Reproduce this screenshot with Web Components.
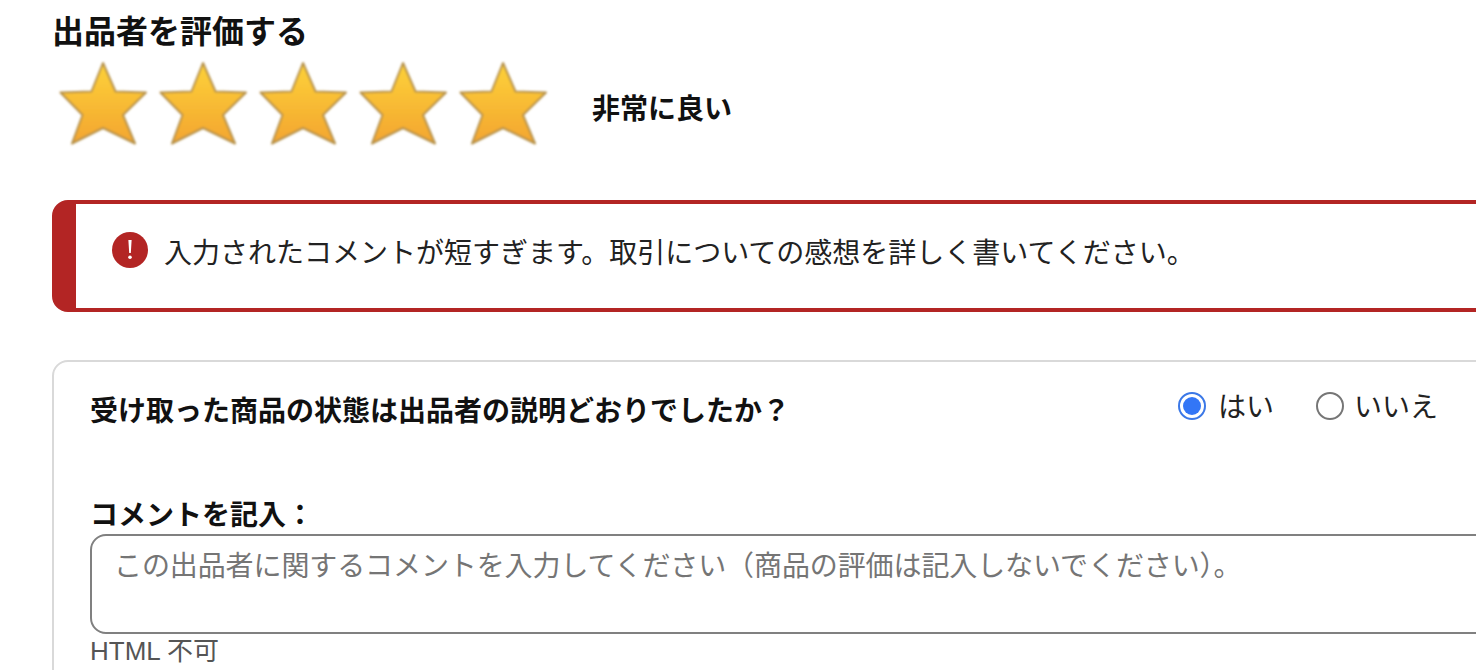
<!DOCTYPE html>
<html lang="ja">
<head>
<meta charset="utf-8">
<title>出品者を評価する</title>
<style>
html,body{margin:0;padding:0;overflow:hidden;height:670px;background:#fff}
body{font-family:"Liberation Sans","Noto Sans CJK JP",sans-serif;color:#111}
</style>
</head>
<body>
<feedback-page>
  <h-title>出品者を評価する</h-title>
  <star-rating value="5" style="margin-top:8px">非常に良い</star-rating>
  <error-box style="margin-top:42px">入力されたコメントが短すぎます。取引についての感想を詳しく書いてください。</error-box>
  <feedback-card style="margin-top:48px">
    <yes-no>受け取った商品の状態は出品者の説明どおりでしたか？</yes-no>
    <comment-box label="コメントを記入：" placeholder="この出品者に関するコメントを入力してください（商品の評価は記入しないでください）。" hint="HTML 不可"></comment-box>
  </feedback-card>
</feedback-page>

<script>
class FeedbackPage extends HTMLElement {
    constructor() {
        super();
        this.attachShadow({mode: 'open'});
        this.shadowRoot.innerHTML = `
<style>
:host{display:block;width:1424px;padding:12px 0 0 52px;box-sizing:content-box}
::slotted(*){margin-right:-16px}
</style>
<slot></slot>`;
    }
}
customElements.define('feedback-page', FeedbackPage);

class HTitle extends HTMLElement {
    constructor() {
        super();
        this.attachShadow({mode: 'open'});
        this.shadowRoot.innerHTML = `
<style>
:host{display:block;font-size:32px;line-height:40px;font-weight:700;color:#111}
</style>
<slot></slot>`;
    }
}
customElements.define('h-title', HTitle);

class StarRating extends HTMLElement {
    constructor() {
        super();
        this.attachShadow({mode: 'open'});
        let stars = '';
        const n = Number(this.getAttribute('value') || 0);
        for (let i = 0; i < n; i++) {
            stars += `<svg width="100" height="98" viewBox="0 0 100 98">
<defs><linearGradient id="g${i}" x1="0" y1="0" x2="0" y2="1"><stop offset="0" stop-color="#fdd23a"/><stop offset="1" stop-color="#f3a52f"/></linearGradient>
<filter id="b${i}" x="-10%" y="-10%" width="120%" height="120%"><feGaussianBlur stdDeviation="0.9"/></filter></defs>
<path filter="url(#b${i})" d="M51 3 L63.5 31.5 L94 32.5 L71 55 L83 83.5 L51 68 L20 83.5 L30.5 55 L8.5 32.5 L39.5 31.5 Z" fill="url(#g${i})" stroke="#b7924a" stroke-width="2" stroke-linejoin="round"/>
</svg>`;
        }
        this.shadowRoot.innerHTML = `
<style>
:host{display:flex;align-items:center;height:98px}
.stars{display:flex;width:500px}
.stars svg{display:block;flex:none}
.label{margin-left:40px;font-size:28px;height:40px;line-height:42px;font-weight:700;color:#111}
</style>
<div class="stars">${stars}</div>
<div class="label"><slot></slot></div>`;
    }
}
customElements.define('star-rating', StarRating);

class ErrorBox extends HTMLElement {
    constructor() {
        super();
        this.attachShadow({mode: 'open'});
        this.shadowRoot.innerHTML = `
<style>
:host{display:flex;align-items:flex-start;gap:16px;box-sizing:border-box;height:112px;padding:28px 36px 0;
  border:4px solid #b32524;border-left-width:24px;border-radius:16px 0 0 16px;background:#fff}
svg{display:block;flex:none}
.msg{font-size:28px;height:40px;line-height:44px;color:#222}
</style>
<svg width="36" height="36" viewBox="0 0 36 36">
<circle cx="18" cy="18" r="18" fill="#b32524"/>
<path d="M16.4 8h3.2l-.8 13h-1.6z" fill="#fff"/>
<circle cx="18" cy="25.3" r="1.8" fill="#fff"/>
</svg>
<div class="msg"><slot></slot></div>`;
    }
}
customElements.define('error-box', ErrorBox);

class FeedbackCard extends HTMLElement {
    constructor() {
        super();
        this.attachShadow({mode: 'open'});
        this.shadowRoot.innerHTML = `
<style>
:host{display:block;box-sizing:border-box;padding:28px 52px 40px 36px;border:2px solid #d9d9d9;border-radius:16px;background:#fff}
</style>
<slot></slot>`;
    }
}
customElements.define('feedback-card', FeedbackCard);

class RadioOption extends HTMLElement {
    constructor() {
        super();
        this.attachShadow({mode: 'open'});
        const on = this.hasAttribute('checked');
        this.shadowRoot.innerHTML = `
<style>
:host{display:flex;align-items:center;gap:var(--radio-gap,12px);font-size:28px;color:#222}
svg{display:block;flex:none}
.text{height:40px;line-height:44px}
</style>
<svg width="28" height="28" viewBox="0 0 28 28">
${on ? '<circle cx="14" cy="14" r="13" fill="#fff" stroke="#3b78e7" stroke-width="2"/><circle cx="14" cy="14" r="9" fill="#3376f6"/>'
     : '<circle cx="14" cy="14" r="13" fill="#fff" stroke="#767676" stroke-width="2"/>'}
</svg>
<div class="text"><slot></slot></div>`;
    }
}
customElements.define('radio-option', RadioOption);

class YesNo extends HTMLElement {
    constructor() {
        super();
        this.attachShadow({mode: 'open'});
        this.shadowRoot.innerHTML = `
<style>
:host{display:flex;justify-content:space-between;align-items:flex-start}
.q{font-size:28px;height:40px;line-height:44px;font-weight:700;color:#111}
.opts{display:flex;gap:42px;margin-top:-4px}
</style>
<div class="q"><slot></slot></div>
<div class="opts"><radio-option checked>はい</radio-option><radio-option style="--radio-gap:10px">いいえ</radio-option></div>`;
    }
}
customElements.define('yes-no', YesNo);

class CommentBox extends HTMLElement {
    constructor() {
        super();
        this.attachShadow({mode: 'open'});
        this.shadowRoot.innerHTML = `
<style>
:host{display:block;margin-top:64px}
.label{font-size:28px;height:40px;line-height:44px;font-weight:700;color:#111}
.area{box-sizing:border-box;height:100px;margin-right:-80px;padding:11px 24px 11px 22px;border:2px solid #808080;border-radius:16px;
  font-size:28px;line-height:40px;letter-spacing:-.1px;color:#757575;white-space:nowrap;overflow:hidden;background:#fff}
.hint{font-size:26px;line-height:34px;color:#555}
</style>
<div class="label"></div>
<div class="area" role="textbox" contenteditable="true"></div>
<div class="hint"></div>`;
        this.shadowRoot.querySelector('.label').innerText = this.getAttribute('label');
        this.shadowRoot.querySelector('.area').innerText = this.getAttribute('placeholder');
        this.shadowRoot.querySelector('.hint').innerText = this.getAttribute('hint');
    }
}
customElements.define('comment-box', CommentBox);
</script>
</body>
</html>
